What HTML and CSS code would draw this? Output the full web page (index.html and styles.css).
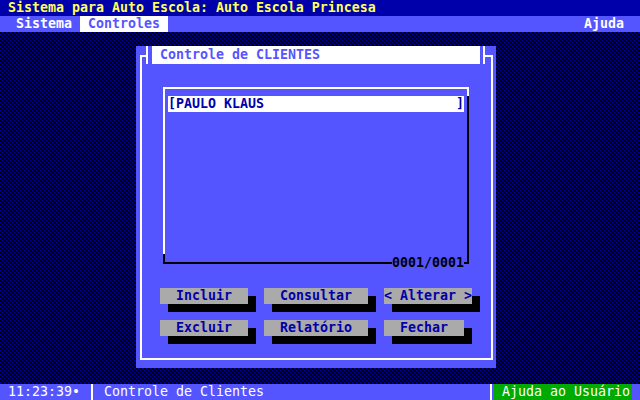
FILE: index.html
```html
<!DOCTYPE html>
<html lang="pt">
<head>
<meta charset="utf-8">
<title>Sistema para Auto Escola</title>
<link rel="stylesheet" href="styles.css">
</head>
<body>
  <header class="titlebar">Sistema para Auto Escola: Auto Escola Princesa</header>
  <nav class="menubar">
    <span class="menu-item">Sistema</span>
    <span class="menu-item active">Controles</span>
    <span class="menu-spacer"></span>
    <span class="menu-item">Ajuda</span>
  </nav>
  <main class="desktop">
    <section class="dialog">
      <div class="frame">
        <div class="title"><span class="title-text">Controle de CLIENTES</span></div>
        <div class="listbox">
          <div class="row selected"><span>[PAULO KLAUS</span><span>]</span></div>
          <span class="counter">0001/0001</span>
        </div>
        <div class="buttons">
          <span class="btn w88">Incluir</span>
          <span class="btn w104">Consultar</span>
          <span class="btn w88">&lt; Alterar &gt;</span>
          <span class="btn w88">Excluir</span>
          <span class="btn w104">Relatório</span>
          <span class="btn w80">Fechar</span>
        </div>
      </div>
    </section>
  </main>
  <footer class="statusbar">
    <span class="clock">11:23:39•</span>
    <span class="sep"></span>
    <span class="message">Controle de Clientes</span>
    <span class="sep"></span>
    <span class="help">Ajuda ao Usuário</span>
  </footer>
</body>
</html>
```

FILE: styles.css
```css
html, body {
  margin: 0;
  padding: 0;
}

body {
  width: 640px;
  height: 400px;
  overflow: hidden;
  display: flex;
  flex-direction: column;
  font-family: "DejaVu Sans Mono", "Liberation Mono", monospace;
  font-size: 13.29px;
  line-height: 16px;
  font-weight: bold;
  background: #000;
}

.titlebar {
  height: 16px;
  background: #0000aa;
  color: #ffff55;
  padding-left: 8px;
  white-space: pre;
}

.menubar {
  height: 16px;
  background: #5555ff;
  color: #ffffff;
  display: flex;
  padding: 0 8px;
}

.menu-item {
  padding: 0 8px;
  white-space: pre;
}

.menu-item.active {
  background: #ffffff;
  color: #5555ff;
}

.menu-spacer {
  flex: 1;
}

.desktop {
  flex: 1;
  background-color: #000;
  background-image: url("data:image/svg+xml,%3Csvg xmlns='http://www.w3.org/2000/svg' width='4' height='4' shape-rendering='crispEdges'%3E%3Crect x='2' y='0' width='1' height='1' fill='%230000aa'/%3E%3Crect x='0' y='2' width='1' height='1' fill='%230000aa'/%3E%3C/svg%3E");
  background-size: 4px 4px;
  background-repeat: repeat;
  padding: 14px 0 0 136px;
  box-sizing: border-box;
}

.dialog {
  width: 360px;
  height: 322px;
  box-sizing: border-box;
  padding: 9px 3px 8px 4px;
  background: #5555ff;
}

.frame {
  position: relative;
  height: 100%;
  box-sizing: border-box;
  border: 2px solid #ffffff;
  padding: 30px 0 0 18px;
}

.title {
  position: absolute;
  top: -11px;
  left: 4px;
  height: 18px;
  display: flex;
  background: #5555ff;
  border-left: 2px solid #ffffff;
  border-right: 2px solid #ffffff;
  padding: 0 3px 0 4px;
}

.title-text {
  width: 328px;
  box-sizing: border-box;
  padding-left: 8px;
  background: #ffffff;
  color: #5555ff;
  line-height: 18px;
  white-space: pre;
}

.listbox {
  position: relative;
  margin-left: 3px;
  width: 306px;
  height: 177px;
  box-sizing: border-box;
  border: 2px solid;
  border-color: #ffffff #000000 #000000 #ffffff;
  padding: 7px 3px;
}

.listbox::before {
  content: "";
  position: absolute;
  right: -2px;
  top: -2px;
  width: 2px;
  height: 9px;
  background: #ffffff;
}

.listbox::after {
  content: "";
  position: absolute;
  left: -2px;
  bottom: -2px;
  width: 2px;
  height: 10px;
  background: #000000;
}

.row {
  height: 16px;
  display: flex;
  justify-content: space-between;
  white-space: pre;
}

.row.selected {
  background: #ffffff;
  color: #0000aa;
}

.counter {
  position: absolute;
  right: 3px;
  bottom: -9px;
  height: 16px;
  background: #5555ff;
  color: #000000;
}

.buttons {
  margin-top: 24px;
  display: grid;
  grid-template-columns: 104px 120px auto;
  row-gap: 16px;
  justify-items: start;
}

.btn {
  height: 16px;
  background: #aaaaaa;
  color: #0000aa;
  text-align: center;
  white-space: pre;
  box-shadow: 8px 8px 0 #000000;
}

.w80 { width: 80px; }
.w88 { width: 88px; }
.w104 { width: 104px; }

.statusbar {
  height: 16px;
  background: #5555ff;
  color: #ffffff;
  display: flex;
  font-weight: normal;
}

.clock {
  width: 91px;
  box-sizing: border-box;
  padding-left: 8px;
  white-space: pre;
}

.sep {
  width: 2px;
  background: #ffffff;
}

.message {
  flex: 1;
  padding-left: 11px;
  white-space: pre;
}

.help {
  margin: 0 8px 0 2px;
  width: 138px;
  box-sizing: border-box;
  padding-left: 8px;
  background: #00aa00;
  color: #ffffff;
  white-space: pre;
}
```
